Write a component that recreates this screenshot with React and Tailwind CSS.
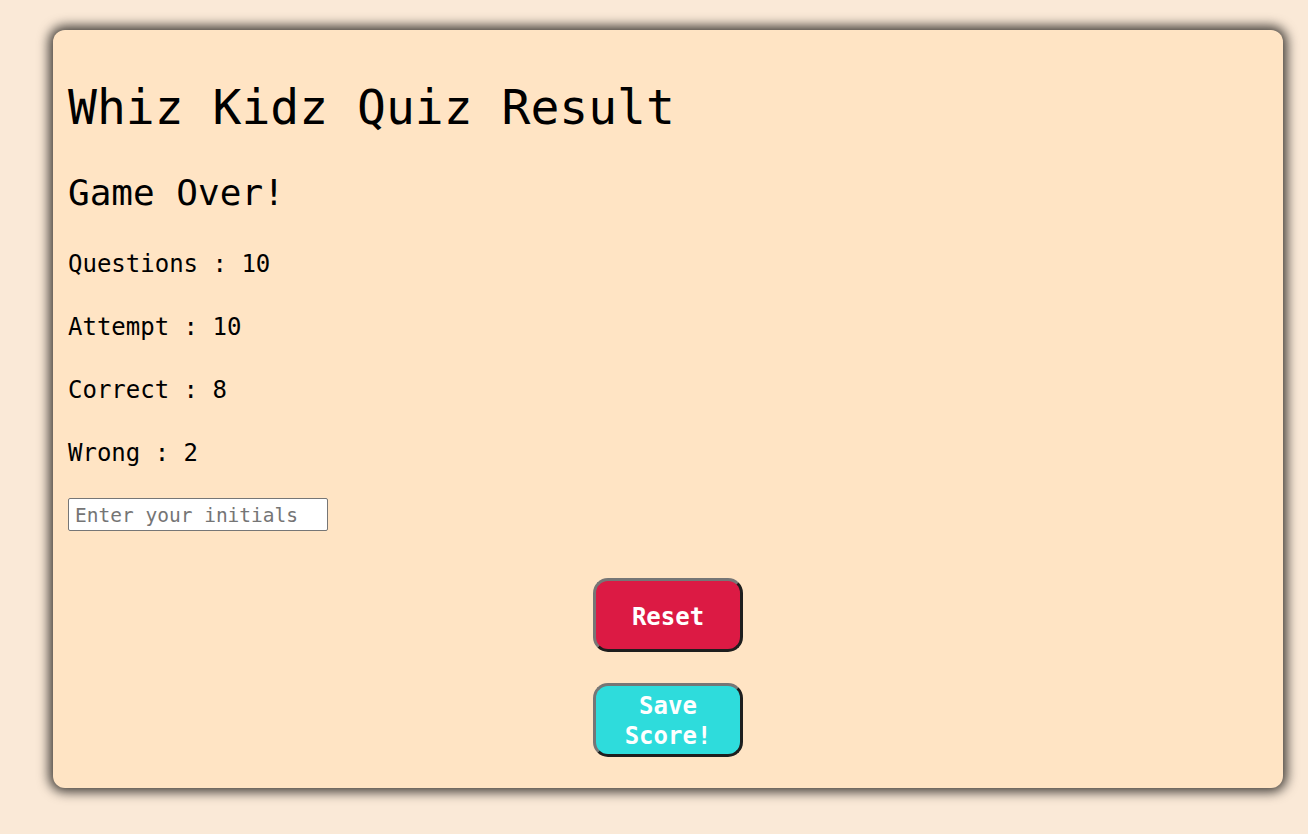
const STATS = [
  ['Questions', 10],
  ['Attempt', 10],
  ['Correct', 8],
  ['Wrong', 2],
];

export default function App() {
  return (
    <div className="min-h-[834px] bg-[#fae9d7] pt-[30px] pb-[46px] font-['DejaVu_Sans_Mono',monospace] text-black">
      <div className="ml-[53px] w-[1230px] rounded-[12px] bg-[#ffe4c4] px-[15px] pt-[49px] pb-[31px] shadow-[0_0_12px_4px_rgba(0,0,0,0.75)]">
        <h1 className="text-[48px] leading-[56px] font-normal">Whiz Kidz Quiz Result</h1>
        <h2 className="mt-[36px] text-[36px] leading-[44px] font-normal">Game Over!</h2>

        <div className="mt-[34px] flex flex-col gap-[33px]">
          {STATS.map(([label, value]) => (
            <p key={label} className="text-[24px] leading-[30px]">
              {label} : {value}
            </p>
          ))}
        </div>

        <input
          type="text"
          placeholder="Enter your initials"
          className="mt-[30px] block h-[33px] w-[260px] rounded-[2px] border border-[#767676] bg-white px-[6px] pt-[2px] text-[19.5px] placeholder-[#757575] outline-none"
        />

        <div className="mt-[47px] flex flex-col items-center gap-[31px]">
          <button className="h-[74px] w-[150px] rounded-[15px] border-[3px] border-t-[#767676] border-l-[#767676] border-r-[#1e1e1e] border-b-[#1e1e1e] bg-[#dc1a44] pt-[3px] text-[24px] leading-[30px] font-semibold text-white">
            Reset
          </button>
          <button className="h-[74px] w-[150px] rounded-[15px] border-[3px] border-t-[#767676] border-l-[#767676] border-r-[#1e1e1e] border-b-[#1e1e1e] bg-[#2edcdc] px-[20px] pt-[2px] text-[24px] leading-[30px] font-semibold text-white">
            Save Score!
          </button>
        </div>
      </div>
    </div>
  );
}
